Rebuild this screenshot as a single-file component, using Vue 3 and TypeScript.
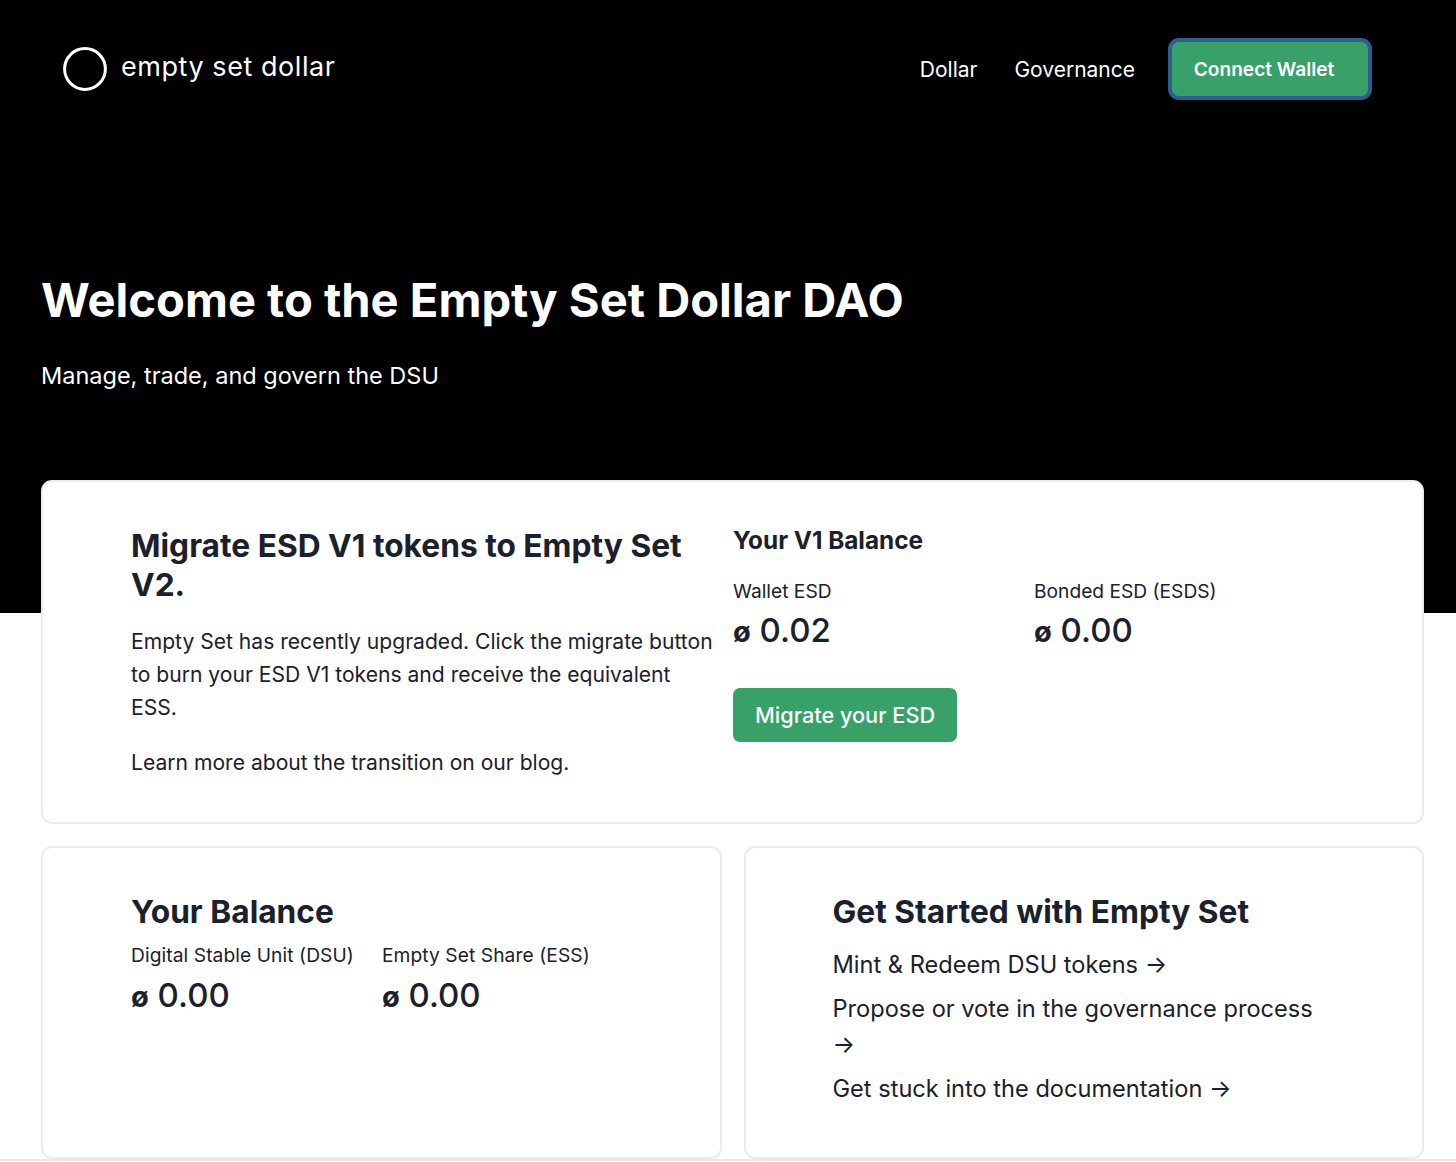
<script setup lang="ts">
const links = ['Dollar', 'Governance']
const v1Balances = [
  { label: 'Wallet ESD', value: '0.02' },
  { label: 'Bonded ESD (ESDS)', value: '0.00' },
]
const balances = [
  { label: 'Digital Stable Unit (DSU)', value: '0.00' },
  { label: 'Empty Set Share (ESS)', value: '0.00' },
]
</script>

<template>
  <div class="page">
    <section class="hero">
      <header class="nav">
        <a class="logo">
          <svg class="logo-mark" width="44" height="44" viewBox="0 0 44 44" aria-hidden="true">
            <circle cx="22" cy="22" r="20.4" fill="none" stroke="#fff" stroke-width="3" />
          </svg>
          <span class="logo-text">empty set dollar</span>
        </a>
        <nav class="nav-links">
          <a v-for="link in links" :key="link" class="nav-link">{{ link }}</a>
          <button type="button" class="btn btn-connect">Connect Wallet</button>
        </nav>
      </header>
      <h1 class="hero-title">Welcome to the Empty Set Dollar DAO</h1>
      <p class="hero-sub">Manage, trade, and govern the DSU</p>
    </section>

    <main class="content">
      <article class="card migrate">
        <div class="migrate-copy">
          <h2 class="card-title">Migrate ESD V1 tokens to Empty Set V2.</h2>
          <p class="copy">Empty Set has recently upgraded. Click the migrate button to burn your ESD V1 tokens and receive the equivalent ESS.</p>
          <p class="copy">Learn more about the transition on our blog.</p>
        </div>
        <div class="migrate-side">
          <h3 class="side-title">Your V1 Balance</h3>
          <div class="stats stats-v1">
            <div v-for="b in v1Balances" :key="b.label" class="stat">
              <div class="stat-label">{{ b.label }}</div>
              <div class="stat-value"><span class="cur">ø</span> {{ b.value }}</div>
            </div>
          </div>
          <button type="button" class="btn btn-migrate">Migrate your ESD</button>
        </div>
      </article>

      <div class="row">
        <article class="card half half-balance">
          <h2 class="card-title">Your Balance</h2>
          <div class="stats stats-main">
            <div v-for="b in balances" :key="b.label" class="stat">
              <div class="stat-label">{{ b.label }}</div>
              <div class="stat-value"><span class="cur">ø</span> {{ b.value }}</div>
            </div>
          </div>
        </article>
        <article class="card half">
          <h2 class="card-title">Get Started with Empty Set</h2>
          <ul class="start-list">
            <li>Mint &amp; Redeem DSU tokens →</li>
            <li>Propose or vote in the governance process →</li>
            <li>Get stuck into the documentation →</li>
          </ul>
        </article>
      </div>
    </main>
    <div class="page-rule"></div>
  </div>
</template>

<style>
html, body {
  background: #fff;
}
</style>

<style scoped>
.page {
  font-family: Inter, "Liberation Sans", sans-serif;
  color: #1a202c;
  height: 1162px;
  overflow: hidden;
}
.hero {
  background: #000;
  color: #fff;
  height: 613px;
  padding: 38px 84px 0 41px;
  box-sizing: border-box;
}
.nav {
  display: flex;
  align-items: center;
  justify-content: space-between;
  padding-left: 22px;
}
.logo {
  display: flex;
  align-items: center;
  gap: 14px;
}
.logo-text {
  font-size: 27px;
  font-weight: 400;
  letter-spacing: 0.55px;
  line-height: 34px;
  margin-top: -4px;
}
.nav-links {
  display: flex;
  align-items: center;
  gap: 37px;
}
.nav-link {
  font-size: 21px;
}
.btn {
  border: none;
  background: #38a169;
  color: #fff;
  font-family: inherit;
  font-weight: 600;
  cursor: pointer;
}
.btn-connect {
  width: 204px;
  height: 62px;
  margin-left: -4px;
  padding: 0 12px 0 0;
  border: 4px solid #2c5f8f;
  border-radius: 11px;
  font-size: 19.1px;
}
.hero-title {
  margin: 170px 0 0;
  font-size: 47.1px;
  line-height: 60px;
  font-weight: 700;
}
.hero-sub {
  margin: 28px 0 0;
  font-size: 23.5px;
  line-height: 36px;
}
.content {
  margin: -133px 32px 0 41px;
  display: flex;
  flex-direction: column;
  gap: 22px;
}
.card {
  background: #fff;
  border: 2px solid #ebecee;
  border-radius: 11px;
  box-sizing: border-box;
}
.migrate {
  display: flex;
  height: 344px;
  padding: 44px 87px 0 88px;
  gap: 16px;
}
.migrate-copy {
  width: 586px;
  flex-shrink: 0;
}
.card-title {
  margin: 0;
  font-size: 31.7px;
  line-height: 39px;
  font-weight: 700;
}
.copy {
  margin: 22px 0 0;
  font-size: 21.1px;
  line-height: 33px;
}
.card-title + .copy {
  margin-top: 21px;
}
.migrate-side {
  flex: 1;
}
.side-title {
  margin: 0;
  font-size: 24.3px;
  line-height: 28px;
  font-weight: 700;
}
.stats {
  display: flex;
}
.stats-v1 {
  margin-top: 23px;
}
.stats-v1 .stat {
  width: 301px;
}
.stats-main {
  margin-top: 10px;
  gap: 28px;
}
.stats-main .stat-label {
  letter-spacing: 0.08px;
}
.stat-label {
  font-size: 19.2px;
  line-height: 28px;
}
.stat-value {
  margin-top: 3px;
  font-size: 33px;
  line-height: 44px;
  font-weight: 500;
}
.stats-main .stat-value {
  margin-top: 4px;
}
.cur {
  font-size: 29px;
  font-weight: 700;
}
.btn-migrate {
  display: block;
  margin-top: 34px;
  width: 224px;
  height: 54px;
  border-radius: 7px;
  font-size: 21.7px;
  font-weight: 500;
}
.row {
  display: grid;
  grid-template-columns: 1fr 1fr;
  gap: 22px;
}
.half {
  height: 313px;
  padding: 44px 87px 0;
}
.half-balance {
  padding-left: 88px;
}
.start-list {
  list-style: none;
  margin: 16px 0 0;
  padding: 0;
  font-size: 23.6px;
  line-height: 36px;
}
.start-list li + li {
  margin-top: 8px;
}
.page-rule {
  height: 2px;
  background: #e6e8eb;
}
</style>
